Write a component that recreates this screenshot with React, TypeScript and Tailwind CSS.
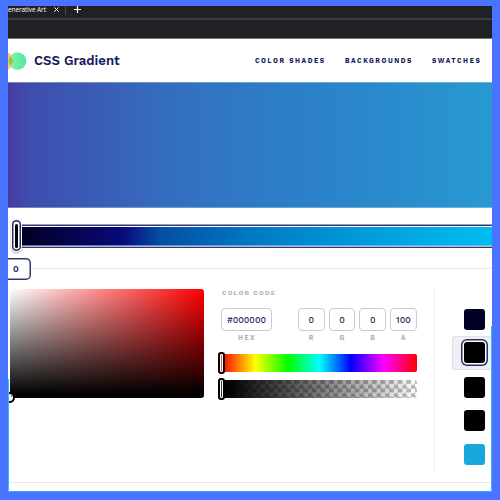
import React from "react";

const channels = [
  { label: "R", value: "0" },
  { label: "G", value: "0" },
  { label: "B", value: "0" },
  { label: "A", value: "100" },
];

function BrowserChrome() {
  return (
    <div className="h-[33px] shrink-0 overflow-hidden border-b border-[#77777a] bg-[#202124]">
      <div className="relative flex h-[14px] items-start border-b-2 border-[#3b3c40] text-white">
        <span className="mt-[-1px] w-[45px] whitespace-nowrap font-['Open_Sans',sans-serif] text-[6.5px] leading-[9px] tracking-[-0.1px]">
          enerative Art
        </span>
        <svg className="ml-[1px] mt-[1px] h-[5px] w-[5px]" viewBox="0 0 5 5" stroke="#fff" strokeWidth="1">
          <path d="M.4.4 4.6 4.6M4.6.4.4 4.6" />
        </svg>
        <span className="ml-[6px] h-[9px] w-px bg-[#48494d]" />
        <svg className="ml-[8px] h-[7px] w-[7px]" viewBox="0 0 7 7" stroke="#fff" strokeWidth="1.2">
          <path d="M3.5 0v7M0 3.5h7" />
        </svg>
      </div>
    </div>
  );
}

function Header() {
  return (
    <header className="flex h-[43px] shrink-0 items-center text-[#15175d]">
      <svg className="h-[18px] w-[19px]" viewBox="0 0 19 18">
        <defs>
          <linearGradient id="mint">
            <stop stopColor="#80f4b5" />
            <stop offset="1" stopColor="#50e997" />
          </linearGradient>
        </defs>
        <circle cx="9.5" cy="9" r="8.8" fill="url(#mint)" />
        <path d="M0 0.5A9 9 0 0 1 5.4 9 9 9 0 0 1 0 17.5" fill="#ffc680" />
        <path d="M2.2 4A9 9 0 0 1 5.4 9 9 9 0 0 1 2.2 14 9 9 0 0 1 2.2 4" fill="#92c848" />
      </svg>
      <span className="ml-[7px] w-[103px] whitespace-nowrap text-[13.2px] font-semibold leading-4 tracking-[-0.03px]">
        CSS Gradient
      </span>
      <nav className="ml-auto flex w-[237px] whitespace-nowrap text-[6.7px] font-bold leading-[8px] tracking-[1.56px]">
        <a className="w-[90px]">COLOR SHADES</a>
        <a className="w-[87px]">BACKGROUNDS</a>
        <a>SWATCHES</a>
      </nav>
    </header>
  );
}

function GradientSlider() {
  return (
    <div className="relative h-[52px] shrink-0 pt-4">
      <div className="ml-2 h-6 bg-[linear-gradient(#9a9bbb_0_1px,#34366f_1px_2px,#fff_2px_3px,#fff_22px,#b9bad0_22px_23px,#34366f_23px_24px)] pt-[3px]">
        <div className="h-[19px] border-b border-[#8bcde9]/60 bg-[linear-gradient(90deg,#020024_0px,#020024_7px,#09097b_107px,#054da5_144px,#0079c2_235px,#00a0df_365px,#00bdf0_476px)]" />
      </div>
      <div className="absolute left-[3px] top-[11px] flex h-[33px] w-[11px] items-center justify-center rounded-full bg-white shadow-[0_1px_2px_#0005]">
        <div className="flex h-[31px] w-[9px] items-center justify-center rounded-full bg-white shadow-[inset_0_0_0_1.5px_#292b69]">
          <span className="h-6 w-[3px] rounded-full bg-black" />
        </div>
      </div>
    </div>
  );
}

function Position() {
  return (
    <div className="flex h-[29px] shrink-0 items-start">
      <div className="-ml-[9px] -mt-[2px] flex h-[22px] w-8 shrink-0 items-center rounded-[5px] pl-[14px] pt-[2px] text-[9px] font-semibold text-[#15175d] shadow-[inset_0_0_0_1.5px_#34366f]">
        0
      </div>
      <div className="mt-2 h-px flex-1 bg-[#ebebed]" />
    </div>
  );
}

function Thumb({ inner }: { inner: string }) {
  return (
    <span
      className={`absolute -left-[4px] -top-[2px] h-[22px] w-[7px] rounded-[3px] border-2 border-black shadow-[inset_0_0_0_1px_white] ${inner}`}
    />
  );
}

function ValueBox({ value, label, width }: { value: string; label: string; width: string }) {
  return (
    <div className={`${width} shrink-0 text-center`}>
      <div className="flex h-[23px] items-center justify-center rounded-[4px] border border-[#cbcbcf] pt-[2px] text-[8.8px] font-medium leading-none text-[#1b1d64]">
        {value}
      </div>
      <div className="mt-[3px] pl-px text-[6.7px] font-bold leading-2 tracking-[1.4px] text-[#b0b2b8]">{label}</div>
    </div>
  );
}

function Picker() {
  return (
    <div className="relative ml-[2px] h-[109px] w-[194px] shrink-0 rounded-[3px] bg-[linear-gradient(to_bottom,transparent,#000_97%),linear-gradient(to_right,#fff,#f00)]">
      <div className="absolute -bottom-[5px] -left-[6px] flex h-[11px] w-[11px] items-center justify-center rounded-full border-2 border-black bg-white">
        <span className="mb-1 ml-1 h-[2px] w-px bg-[#777]" />
      </div>
    </div>
  );
}

function ColorCode() {
  return (
    <div className="ml-[17px] w-[196px] shrink-0 pl-px">
      <div className="h-[19px] whitespace-nowrap text-[6.5px] font-bold leading-[8px] tracking-[1.2px] text-[#b0b2b8]">
        COLOR CODE
      </div>
      <div className="-ml-px flex">
        <ValueBox value="#000000" label="HEX" width="w-[51px]" />
        <div className="ml-[26px] flex gap-[4px]">
          {channels.map((c) => (
            <ValueBox key={c.label} value={c.value} label={c.label} width="w-[26.7px]" />
          ))}
        </div>
      </div>
      <div className="relative mt-3 h-[18px] w-[194.5px] rounded-[2px] bg-[linear-gradient(90deg,#f00,#ff0_17%,#0f0_34%,#0ff_50%,#00f_66%,#f0f_83%,#f00)]">
        <Thumb inner="bg-[#ff4b42]" />
      </div>
      <div className="relative mt-2 h-[18px] w-[194.5px] rounded-[3px] bg-[linear-gradient(90deg,#000_3%,transparent),conic-gradient(#bbb_25%,#fff_0_50%,#bbb_0_75%,#fff_0)] bg-[length:100%_100%,8.6px_8.6px]">
        <Thumb inner="bg-[#333]" />
      </div>
    </div>
  );
}

function Swatches() {
  return (
    <div className="ml-[17px] flex h-[183px] flex-1 flex-col border-l border-[#ededee] pl-[17px] pt-[14px]">
      {["bg-[#020024]", "selected", "bg-black", "bg-black", "bg-[#19a8de]"].map((color, i) => (
        <div
          key={i}
          className={
            color === "selected"
              ? "-mt-px mb-px flex h-[34px] shrink-0 items-center rounded-l-[3px] border border-r-0 border-[#e0e1e5] bg-[#eff0f3] pl-[8px]"
              : "flex h-[33.6px] shrink-0 items-center pl-[11.6px]"
          }
        >
          {color === "selected" ? (
            <div className="flex h-[27px] w-[27px] items-center justify-center rounded-[6px] bg-white shadow-[inset_0_0_0_1.5px_#2b2d6b]">
              <span className="h-[21px] w-[21px] rounded-[3px] bg-black" />
            </div>
          ) : (
            <span className={`h-[21px] w-[21px] rounded-[3px] ${color}`} />
          )}
        </div>
      ))}
    </div>
  );
}

export default function App() {
  return (
    <div className="h-[500px] w-[500px] bg-[#4874ff] px-2 pb-2 pt-[6px] font-['Work_Sans',Inter,sans-serif]">
      <main className="relative flex h-[486px] flex-col overflow-hidden bg-white">
        <BrowserChrome />
        <Header />
        <section className="h-[126px] shrink-0 border-y border-white/30 bg-[linear-gradient(90deg,#49389f_0px,#4146a8_11px,#3e4eae_25px,#3b5ab5_78px,#3470bf_170px,#2d7cc6_260px,#2a88cb_360px,#2899d1_484px)]" />
        <GradientSlider />
        <Position />
        <section className="flex h-[193px] shrink-0 items-start">
          <Picker />
          <ColorCode />
          <Swatches />
        </section>
        <div className="h-px shrink-0 bg-[#e7e8ef]" />
        <div className="flex-1 border-b border-[#28aaff]" />
        <span className="absolute bottom-0 left-0 h-[113px] w-px bg-[#3db8ff]" />
        <span className="absolute bottom-0 right-0 h-[166px] w-px bg-[#3db8ff]" />
      </main>
    </div>
  );
}
